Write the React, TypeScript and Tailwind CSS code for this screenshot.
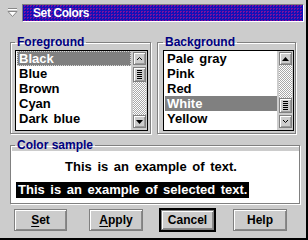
import React from "react";

const FOREGROUND = ["Black", "Blue", "Brown", "Cyan", "Dark blue"];
const BACKGROUND = ["Pale gray", "Pink", "Red", "White", "Yellow"];

const bevel =
  "border border-[#808080] bg-[#cccccc] shadow-[inset_1px_1px_0_#fff,inset_-1px_-1px_0_#9a9a9a]";

function Tri({ up }: { up?: boolean }) {
  return (
    <svg width="7" height="4" viewBox="0 0 7 4">
      <polygon points={up ? "3.5,0 7,4 0,4" : "0,0 7,0 3.5,4"} fill="#000" />
    </svg>
  );
}

function Chevron({ up }: { up?: boolean }) {
  return (
    <svg width="5" height="3" viewBox="0 0 5 3">
      <polyline
        points={up ? "0,3 2.5,0.5 5,3" : "0,0 2.5,2.5 5,0"}
        fill="none"
        stroke="#000"
        strokeWidth="1"
      />
    </svg>
  );
}

function Thumb() {
  return (
    <div className={`${bevel} w-[13px] h-[15px] flex flex-col items-center justify-center gap-[1px]`}>
      {[0, 1, 2, 3, 4].map((i) => (
        <div key={i} className="w-[5px] h-[1px] bg-black" />
      ))}
    </div>
  );
}

function Track() {
  return (
    <div className="w-[13px] flex-1 bg-[conic-gradient(#ffffff_25%,#a8a8a8_0_50%,#ffffff_0_75%,#a8a8a8_0)] bg-[length:2px_2px]" />
  );
}

function ScrollBar({ atTop }: { atTop: boolean }) {
  const btn = `${bevel} w-[13px] h-[13px] flex items-center justify-center`;
  return (
    <div className="w-[16px] bg-[#cccccc] flex flex-col items-center pt-[1px] pb-[2px]">
      <div className={btn}>{atTop ? <Chevron up /> : <Tri up />}</div>
      {atTop ? (
        <>
          <div className="h-[2px]" />
          <Thumb />
          <Track />
        </>
      ) : (
        <>
          <Track />
          <Thumb />
          <div className="h-[2px]" />
        </>
      )}
      <div className={btn}>{atTop ? <Tri /> : <Chevron />}</div>
    </div>
  );
}

function ListBox({
  items,
  selected,
  focused,
  atTop,
  width,
}: {
  items: string[];
  selected: string;
  focused?: boolean;
  atTop: boolean;
  width: string;
}) {
  return (
    <div className={`${width} h-[81px] border border-black bg-white flex`}>
      <div className="flex-1 pl-[1px] pt-0">
        {items.map((name) => (
          <div
            key={name}
            className={`h-[15px] leading-[15px] pl-[2px] text-[13px] font-bold [word-spacing:2px] ${
              name === selected ? "bg-[#808080] text-white" : "text-black"
            } ${name === selected && focused ? "outline-1 outline-dotted outline-[#d8d8d8] -outline-offset-1" : ""}`}
          >
            {name}
          </div>
        ))}
      </div>
      <ScrollBar atTop={atTop} />
    </div>
  );
}

function Legend({ children }: { children: React.ReactNode }) {
  return (
    <legend className="px-[2px] text-[12px] leading-[12px] font-bold text-[#000080]">
      {children}
    </legend>
  );
}

const frame =
  "border border-[#808080] shadow-[inset_1px_1px_0_#fff,1px_1px_0_#fff]";

function Button({ label, hot, width }: { label: string; hot?: number; width: string }) {
  const text =
    hot === undefined ? (
      label
    ) : (
      <>
        {label.slice(0, hot)}
        <u className="underline-offset-2">{label[hot]}</u>
        {label.slice(hot + 1)}
      </>
    );
  return (
    <div
      className={`${width} h-[22px] border border-[#808080] bg-[#cccccc] shadow-[inset_1px_1px_0_#fff,inset_-1px_-1px_0_#8a8a8a] flex items-center justify-center text-[12px] font-bold text-black`}
    >
      <span>{text}</span>
    </div>
  );
}

export default function App() {
  return (
    <div className="w-[308px] h-[240px] bg-[#cccccc] border-r-2 border-b-2 border-black font-['Liberation_Sans',Arial,sans-serif] select-none overflow-hidden">
      {/* title row */}
      <div className="flex pt-[4px]">
        <div className="w-[22px] h-[18px] flex items-start justify-start pl-[7px] pt-[4px]">
          <svg width="11" height="9" viewBox="0 0 11 9">
            <line x1="1" y1="0.5" x2="10" y2="0.5" stroke="#888" />
            <line x1="1" y1="1.5" x2="10" y2="1.5" stroke="#fff" />
            <polygon points="1,3.5 10,3.5 5.5,8.5" fill="#fff" stroke="#888" strokeWidth="1" />
          </svg>
        </div>
        <div className="w-[282px] h-[18px] border-t border-l border-[#808080] border-r border-b border-r-white border-b-white bg-[#1212b8] bg-[conic-gradient(#7a10a0_25%,#1212b8_0)] bg-[length:3px_3px] flex items-center pl-[10px]">
          <span className="text-white text-[12px] font-bold tracking-[-0.4px] leading-none">
            Set Colors
          </span>
        </div>
      </div>

      {/* colour lists */}
      <div className="flex mt-[14px]">
        <fieldset className={`${frame} ml-[10px] w-[141px] pl-[4px] pr-[1px] pt-[2px] pb-[2px]`}>
          <Legend>Foreground</Legend>
          <ListBox items={FOREGROUND} selected="Black" focused atTop width="w-[133px]" />
        </fieldset>
        <fieldset className={`${frame} ml-[6px] w-[139px] pl-[5px] pr-[1px] pt-[2px] pb-[2px]`}>
          <Legend>Background</Legend>
          <ListBox items={BACKGROUND} selected="White" atTop={false} width="w-[131px]" />
        </fieldset>
      </div>

      {/* sample */}
      <fieldset className={`${frame} ml-[10px] mt-[5px] w-[290px] p-0`}>
        <legend className="ml-[4px] px-[2px] text-[12px] leading-[12px] font-bold text-[#000080]">
          Color sample
        </legend>
        <div className="bg-white h-[52px] pt-[8px] text-[13px] font-bold [word-spacing:2px] text-black">
          <div className="h-[15px] leading-[15px] text-center pr-[8px]">
            This is an example of text.
          </div>
          <div className="mt-[6px] ml-[5px]">
            <span className="inline-block h-[16px] leading-[16px] bg-black text-white px-[2px]">
              This is an example of selected text.
            </span>
          </div>
        </div>
      </fieldset>

      {/* buttons */}
      <div className="flex items-center mt-[4px] pl-[14px] h-[24px]">
        <Button label="Set" hot={0} width="w-[53px]" />
        <div className="ml-[22px]">
          <Button label="Apply" hot={0} width="w-[54px]" />
        </div>
        <div className="ml-[16px] border-2 border-black">
          <div className="w-[53px] h-[20px] border border-[#808080] bg-[#cccccc] shadow-[inset_1px_1px_0_#fff,inset_-1px_-1px_0_#8a8a8a] flex items-center justify-center text-[12px] font-bold text-black">
            Cancel
          </div>
        </div>
        <div className="ml-[17px]">
          <Button label="Help" width="w-[54px]" />
        </div>
      </div>
    </div>
  );
}
